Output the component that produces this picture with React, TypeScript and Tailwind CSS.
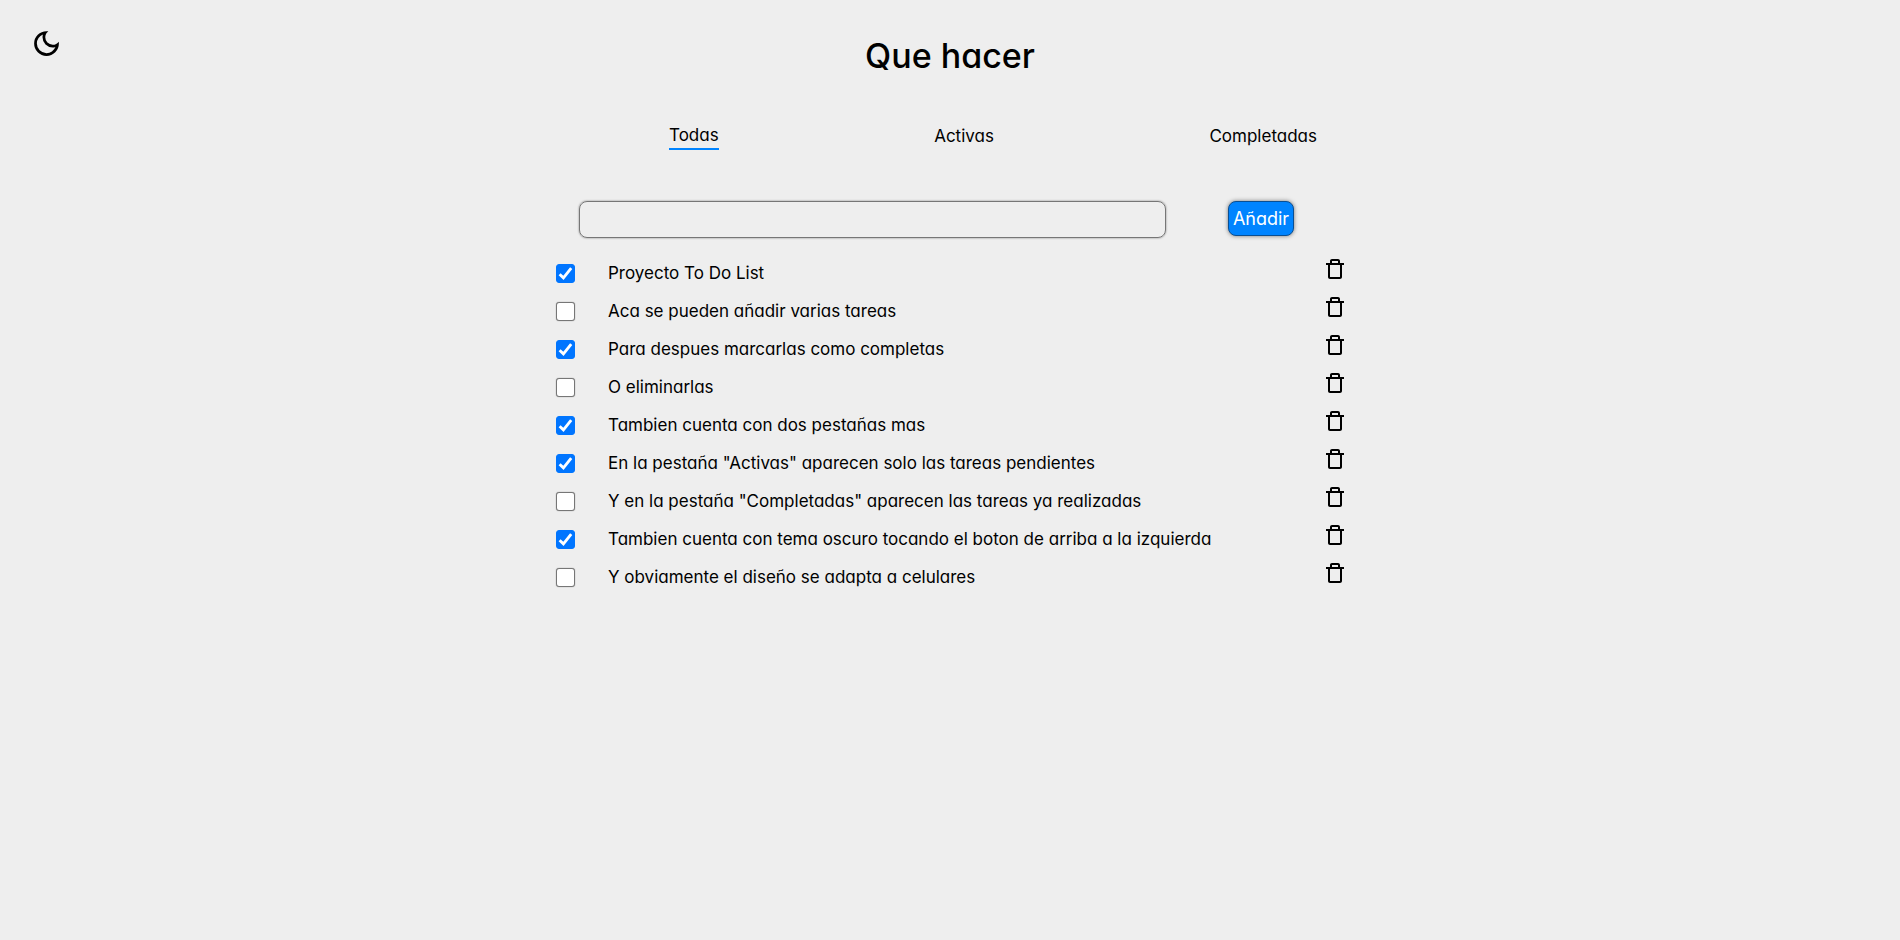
import { useState } from "react";
import { BiTrashAlt } from "react-icons/bi";

type Task = { id: number; text: string; done: boolean };

const initialTasks: Task[] = [
  { id: 1, text: "Proyecto To Do List", done: true },
  { id: 2, text: "Aca se pueden añadir varias tareas", done: false },
  { id: 3, text: "Para despues marcarlas como completas", done: true },
  { id: 4, text: "O eliminarlas", done: false },
  { id: 5, text: "Tambien cuenta con dos pestañas mas", done: true },
  { id: 6, text: 'En la pestaña "Activas" aparecen solo las tareas pendientes', done: true },
  { id: 7, text: 'Y en la pestaña "Completadas" aparecen las tareas ya realizadas', done: false },
  { id: 8, text: "Tambien cuenta con tema oscuro tocando el boton de arriba a la izquierda", done: true },
  { id: 9, text: "Y obviamente el diseño se adapta a celulares", done: false },
];

const tabs = ["Todas", "Activas", "Completadas"];

function MoonIcon() {
  return (
    <svg viewBox="0 -960 960 960" aria-hidden="true" className="size-[33px] fill-current">
      <path d="M480-120q-150 0-255-105T120-480q0-150 105-255t255-105q14 0 27.5 1t26.5 3q-41 29-65.5 75.5T444-660q0 90 63 153t153 63q55 0 101-24.5t75-65.5q2 13 3 26.5t1 27.5q0 150-105 255T480-120Zm0-80q88 0 158-48.5T740-375q-20 5-40 8t-40 3q-123 0-209.5-86.5T364-660q0-20 3-40t8-40q-78 32-126.5 102T200-480q0 116 82 198t198 82Z" />
    </svg>
  );
}

function TaskRow({ task, onToggle, onDelete }: { task: Task; onToggle: () => void; onDelete: () => void }) {
  const inputId = `task-${task.id}`;
  return (
    <li className="flex min-h-[38px] items-center">
      <span className="relative mr-[33px] flex size-[19px] shrink-0">
        <input
          id={inputId}
          type="checkbox"
          checked={task.done}
          onChange={onToggle}
          className="peer size-[19px] appearance-none rounded-[3px] border border-[#767676] bg-white shadow-[0_0_1px_#767676] checked:border-[#0075ff] checked:bg-[#0075ff] checked:shadow-none"
        />
        <svg
          viewBox="0 0 20 20"
          aria-hidden="true"
          className="pointer-events-none absolute inset-0 hidden size-[19px] fill-none stroke-white stroke-3 peer-checked:block"
        >
          <path d="M3.8 10.8 7.8 14.6 16 4.4" />
        </svg>
      </span>
      <label htmlFor={inputId} className="grow text-[17px] leading-6">
        {task.text}
      </label>
      <button type="button" aria-label="Eliminar" onClick={onDelete} className="mb-2 shrink-0">
        <BiTrashAlt className="size-6" />
      </button>
    </li>
  );
}

export default function App() {
  const [tasks, setTasks] = useState(initialTasks);
  const [tab, setTab] = useState("Todas");
  const [draft, setDraft] = useState("");

  const visible = tasks.filter((t) => tab === "Todas" || (tab === "Completadas" ? t.done : !t.done));

  const addTask = () => {
    if (!draft.trim()) return;
    setTasks([...tasks, { id: Date.now(), text: draft.trim(), done: false }]);
    setDraft("");
  };

  return (
    <div className="min-h-screen bg-[#eeeeee] font-['Inter',sans-serif] text-black [font-feature-settings:'cv11']">
      <header className="grid grid-cols-[1fr_auto_1fr] items-start px-[30px] pt-[27px]">
        <button type="button" aria-label="Tema oscuro" className="justify-self-start">
          <MoonIcon />
        </button>
        <h1 className="pt-[5px] text-[34px] leading-12 font-medium">Que hacer</h1>
      </header>

      <main className="mx-auto max-w-[794px] pt-10">
        <nav className="flex h-8 items-center justify-between pr-[30px] pl-[116px]">
          {tabs.map((name) => (
            <button
              key={name}
              type="button"
              onClick={() => setTab(name)}
              className={
                name === tab
                  ? "border-b-2 border-[#0084ff] text-[17px] leading-[26px]"
                  : "text-[17px] leading-[26px]"
              }
            >
              {name}
            </button>
          ))}
        </nav>

        <form
          className="flex items-start pt-[49px] pr-[53px] pl-[26px]"
          onSubmit={(e) => {
            e.preventDefault();
            addTask();
          }}
        >
          <input
            type="text"
            aria-label="Nueva tarea"
            value={draft}
            onChange={(e) => setDraft(e.target.value)}
            className="mr-[62px] h-[37px] min-w-0 grow rounded-lg border border-[#767676] px-2 text-[17px] shadow-[0_0_2px_#767676]"
          />
          <button
            type="submit"
            className="h-[35px] w-[66px] rounded-lg border border-[#0a4f93] bg-[#0084ff] text-lg text-white shadow-[0_0_4px_#777]"
          >
            Añadir
          </button>
        </form>

        <ul className="pt-4 pl-[3px]">
          {visible.map((task) => (
            <TaskRow
              key={task.id}
              task={task}
              onToggle={() => setTasks(tasks.map((t) => (t.id === task.id ? { ...t, done: !t.done } : t)))}
              onDelete={() => setTasks(tasks.filter((t) => t.id !== task.id))}
            />
          ))}
        </ul>
      </main>
    </div>
  );
}
